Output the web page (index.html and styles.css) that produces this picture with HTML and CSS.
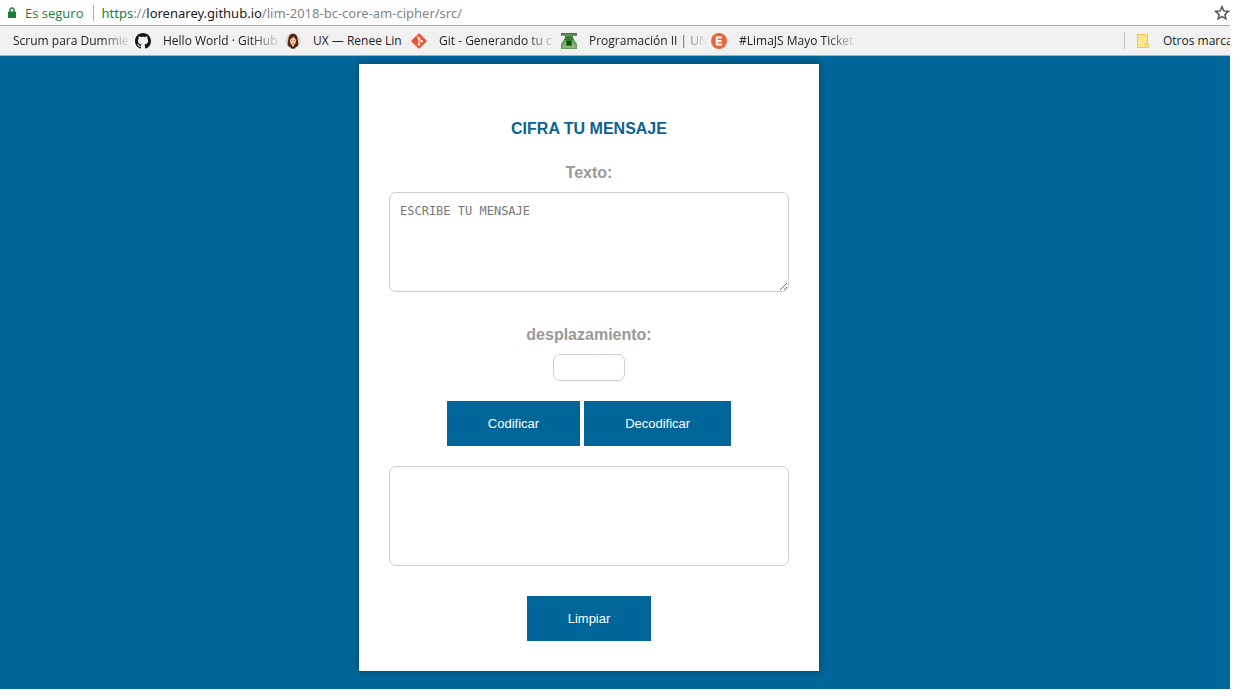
FILE: index.html
```html
<!DOCTYPE html>
<html lang="es">
<head>
<meta charset="utf-8">
<title>Cifra tu mensaje</title>
<link rel="stylesheet" href="styles.css">
</head>
<body>
<div class="window">
  <header class="address-bar">
    <svg class="lock" viewBox="0 0 8 11" aria-hidden="true"><path d="M2 5V3a2 2 0 0 1 4 0v2" fill="none" stroke="#188038" stroke-width="1.4"/><rect y="4.4" width="8" height="6.6" rx=".6" fill="#188038"/></svg>
    <span class="secure">Es seguro</span>
    <span class="divider"></span>
    <span class="url"><span class="scheme">https</span>://<span class="host">lorenarey.github.io</span>/lim-2018-bc-core-am-cipher/src/</span>
    <button class="star" type="button" aria-label="Añadir a marcadores"><svg viewBox="0 0 16 16"><path d="M8 1.8l1.8 4.1 4.5.5-3.4 3 1 4.4L8 11.5l-3.9 2.3 1-4.4-3.4-3 4.5-.5z" fill="none" stroke="#505357" stroke-width="1.5"/></svg></button>
  </header>
  <nav class="bookmarks">
    <a class="bookmark" href="#"><span class="name fade">Scrum para Dummie</span></a>
    <a class="bookmark" href="#">
      <svg class="icon" viewBox="0 0 16 16"><path fill="#151515" d="M8 0C3.58 0 0 3.58 0 8c0 3.54 2.29 6.53 5.47 7.59.4.07.55-.17.55-.38 0-.19-.01-.82-.01-1.49-2.01.37-2.53-.49-2.69-.94-.09-.23-.48-.94-.82-1.13-.28-.15-.68-.52-.01-.53.63-.01 1.08.58 1.23.82.72 1.21 1.87.87 2.33.66.07-.52.28-.87.51-1.07-1.78-.2-3.64-.89-3.64-3.95 0-.87.31-1.59.82-2.15-.08-.2-.36-1.02.08-2.12 0 0 .67-.21 2.2.82.64-.18 1.32-.27 2-.27s1.36.09 2 .27c1.53-1.04 2.2-.82 2.2-.82.44 1.1.16 1.92.08 2.12.51.56.82 1.27.82 2.15 0 3.07-1.87 3.75-3.65 3.95.29.25.54.73.54 1.48 0 1.07-.01 1.93-.01 2.2 0 .21.15.46.55.38A8.01 8.01 0 0 0 16 8c0-4.42-3.58-8-8-8z"/></svg>
      <span class="name fade">Hello World · GitHub</span></a>
    <a class="bookmark" href="#">
      <svg class="icon" viewBox="0 0 16 16"><circle cx="8" cy="8" r="7.6" fill="#d6d4d2"/><path d="M8 .8C4.8.8 3.6 3.400 3.300 6.500 3 9.500 2.200 11 3 12.500 4 14 5.500 14.600 8 14.600s4-.6 5-2.100c.8-1.500 0-3-.3-6C12.400 3.400 11.200.8 8 .8z" fill="#54270f"/><path d="M8.500 3.500C7 5.300 5.200 5.800 5 7.200c-.2 2.600 1.300 5 3 5s3.200-2.400 3-5c-.1-1.400-1.500-2-2.500-3.700z" fill="#f3c5a0"/><path d="M5.500 15.200l1-2.700h3l1 2.700a7.600 7.600 0 0 1-5 0z" fill="#24191a"/><path d="M7 11.500h2v1.800l-1 .8-1-.8z" fill="#e9b38b"/><path d="M6 7.500h1M9 7.500h1M7.200 10.200h1.600" stroke="#8a3b25" stroke-width=".6"/></svg>
      <span class="name short">UX — Renee Lin</span></a>
    <a class="bookmark" href="#">
      <svg class="icon" viewBox="0 0 16 16"><rect x="2.300" y="2.300" width="11.400" height="11.400" rx="1" transform="rotate(45 8 8)" fill="#f05133"/><path d="M5.600 2.800L8 5.300v6M8 5.500l2.600 2.600" stroke="#fff" stroke-width="1" fill="none"/><circle cx="8" cy="5.500" r="1.200" fill="#fff"/><circle cx="8" cy="11.200" r="1.200" fill="#fff"/><circle cx="10.700" cy="8.200" r="1.200" fill="#fff"/></svg>
      <span class="name fade">Git - Generando tu c</span></a>
    <a class="bookmark" href="#">
      <svg class="icon" viewBox="0 0 16 16"><path d="M0 0h16v3h-4v2l4 6v5H0v-5l4-6V3H0z" fill="#6a9c60"/><path d="M0 0h16v1.500H0zM4 3h8v2l1 2H3l1-2z" fill="#3f7b38"/><path d="M1 14l4-6h6l4 6v1H1z" fill="#8db383"/><path d="M5 7h6v6H5z" fill="#347d2d"/><path d="M6 8h4v4H6z" fill="#075607"/></svg>
      <span class="name fade">Programación II | UN</span></a>
    <a class="bookmark" href="#">
      <svg class="icon" viewBox="0 0 16 16"><circle cx="8" cy="8" r="8" fill="#ed6536"/><path d="M11 4.500H5.800v7H11M5.800 8h4.700" stroke="#fff" stroke-width="2" fill="none"/></svg>
      <span class="name fade">#LimaJS Mayo Ticket</span></a>
    <a class="bookmark others" href="#">
      <svg class="icon" viewBox="0 0 16 16"><path d="M2.500 1.500h10v9.500h1v3.500h-11z" fill="#ffe58d" stroke="#eac65b"/><path d="M10.500 14.500v-3.500h2" fill="none" stroke="#eac65b"/></svg>
      <span class="name">Otros marcadores</span></a>
  </nav>
  <main class="page">
    <form class="card">
      <h1 class="title">CIFRA TU MENSAJE</h1>
      <div class="field">
        <label for="message">Texto:</label>
        <textarea class="box" id="message" placeholder="ESCRIBE TU MENSAJE"></textarea>
      </div>
      <div class="field shift">
        <label for="offset">desplazamiento:</label>
        <input class="offset" id="offset" type="text">
      </div>
      <div class="actions">
        <button class="btn" type="button">Codificar</button>
        <button class="btn" type="button">Decodificar</button>
      </div>
      <textarea class="box result" aria-label="Resultado" readonly></textarea>
      <button class="btn clear" type="reset">Limpiar</button>
    </form>
  </main>
</div>
</body>
</html>
```
FILE: styles.css
```css
* {
  box-sizing: border-box;
}

body {
  margin: 0;
  background: #fff;
  font-family: "Liberation Sans", Arial, sans-serif;
}

.window {
  display: flex;
  flex-direction: column;
  min-height: 100vh;
  padding: 0 5px 8px 0;
}

.address-bar,
.bookmarks {
  display: flex;
  align-items: center;
  font-family: "Open Sans", "Noto Sans", sans-serif;
  white-space: nowrap;
  overflow: hidden;
}

.address-bar {
  height: 26px;
  padding-left: 8px;
  border-bottom: 1px solid #a9a9a9;
  font-size: 13px;
}

.lock {
  width: 8px;
  height: 11px;
  margin-right: 9px;
}

.secure,
.scheme {
  color: #188038;
}

.divider {
  width: 1px;
  height: 16px;
  margin: 0 7px 0 10px;
  background: #b5b5b5;
}

.url {
  color: #80868b;
  font-family: "Noto Sans", "Open Sans", sans-serif;
}

.host {
  color: #202124;
}

.star {
  width: 16px;
  height: 16px;
  margin-left: auto;
  padding: 0;
  border: 0;
  background: none;
}

.star svg {
  display: block;
}

.bookmarks {
  height: 30px;
  gap: 4px;
  padding-left: 13px;
  border-bottom: 1px solid #9db3bd;
  background: #f1f1f1;
  font-size: 12px;
}

.bookmark {
  display: flex;
  flex: none;
  align-items: center;
  gap: 12px;
  color: #222;
  text-decoration: none;
}

.icon {
  flex: none;
  width: 16px;
  height: 16px;
}

.fade {
  width: 118px;
  mask-image: linear-gradient(to right, #000 88px, transparent 118px);
}

.short {
  width: 94px;
}

.others {
  width: 106px;
  margin-left: auto;
  padding-left: 10px;
  border-left: 1px solid #c4c4c4;
}

.page {
  flex: 1;
  padding: 8px 52px 18px 0;
  background: #006699;
}

.card {
  display: flex;
  flex-direction: column;
  align-items: center;
  max-width: 460px;
  margin: 0 auto;
  padding: 56px 30px 30px;
  background: #fff;
  box-shadow: 0 0 8px rgba(0, 0, 0, 0.35);
}

.title {
  margin: 0 0 26px;
  color: #0c6291;
  font-size: 16px;
  line-height: 18px;
}

.field {
  display: flex;
  flex-direction: column;
  align-items: center;
  gap: 10px;
  width: 100%;
  color: #999;
  font-size: 16px;
  font-weight: bold;
  line-height: 18px;
}

.shift {
  margin: 34px 0 20px;
}

.box,
.offset {
  border: 1px solid #ccc;
  border-radius: 7px;
  background: #fff;
}

.box {
  display: block;
  width: 100%;
  height: 100px;
  padding: 10px;
  font-family: "DejaVu Sans Mono", monospace;
  font-size: 12px;
  line-height: 16px;
}

.box::placeholder {
  color: #777;
}

.offset {
  width: 72px;
  height: 27px;
  padding: 5px;
}

.actions {
  display: flex;
  gap: 4px;
}

.btn {
  padding: 15px 41px;
  border: 0;
  background: #006699;
  color: #fff;
  font-family: "Liberation Sans", Arial, sans-serif;
  font-size: 13px;
  line-height: 15px;
}

.result {
  margin: 20px 0 30px;
  resize: none;
}
```
